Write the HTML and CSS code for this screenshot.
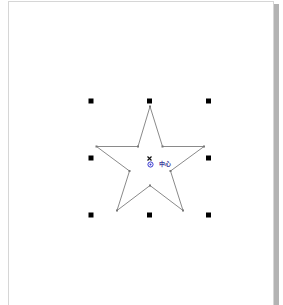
FILE: index.html
```html
<!DOCTYPE html>
<html>
<head>
<meta charset="utf-8">
<link rel="stylesheet" href="styles.css">
</head>
<body>
<div class="page">
  <svg class="canvas" width="264" height="303" viewBox="9 2 264 303" xmlns="http://www.w3.org/2000/svg">
    <g class="handles" fill="#000">
      <rect x="88.5" y="98.5" width="5" height="5"/>
      <rect x="147" y="98.5" width="5" height="5"/>
      <rect x="206" y="98.5" width="5" height="5"/>
      <rect x="88.5" y="155.5" width="5" height="5"/>
      <rect x="206" y="155.5" width="5" height="5"/>
      <rect x="88.5" y="212.5" width="5" height="5"/>
      <rect x="147" y="212.5" width="5" height="5"/>
      <rect x="206" y="212.5" width="5" height="5"/>
    </g>
    <polygon points="150,106.5 162.5,146.5 204,146.5 170.5,171 183,210.5 150,185.5 117,210.5 129.5,171 96.5,146.5 138,146.5" fill="none" stroke="#8a8a8a" stroke-width="1"/>
    <g fill="#777">
      <rect x="149" y="105.5" width="2" height="2"/>
      <rect x="161.5" y="145.5" width="2" height="2"/>
      <rect x="203" y="145.5" width="2" height="2"/>
      <rect x="169.5" y="170" width="2" height="2"/>
      <rect x="182" y="209.5" width="2" height="2"/>
      <rect x="149" y="184.5" width="2" height="2"/>
      <rect x="116" y="209.5" width="2" height="2"/>
      <rect x="128.5" y="170" width="2" height="2"/>
      <rect x="95.5" y="145.5" width="2" height="2"/>
      <rect x="137" y="145.5" width="2" height="2"/>
    </g>
    <path d="M147.5 156.5 L151.5 160.5 M151.5 156.5 L147.5 160.5" stroke="#111" stroke-width="1.2"/>
    <circle cx="150.5" cy="164.5" r="2.6" fill="none" stroke="#3a3ad0" stroke-width="1"/>
    <circle cx="150.5" cy="164.5" r="1" fill="#3a3ad0"/>
    <text x="159" y="166" class="label">中心</text>
  </svg>
</div>
</body>
</html>
```
FILE: styles.css
```css
html, body {
  margin: 0;
  padding: 0;
  background: #ffffff;
  overflow: hidden;
}
.page {
  margin: 1px 0 0 8px;
  width: 264px;
  height: 303px;
  border: 1px solid #d6d6d6;
  border-bottom: none;
  box-shadow: 5px 3px 0 #b3b3b3;
  background: #ffffff;
}
.canvas {
  display: block;
}
.label {
  font-family: "Noto Sans CJK SC", "Noto Sans", sans-serif;
  font-size: 6px;
  font-weight: 700;
  fill: #3a3a9a;
}
```
